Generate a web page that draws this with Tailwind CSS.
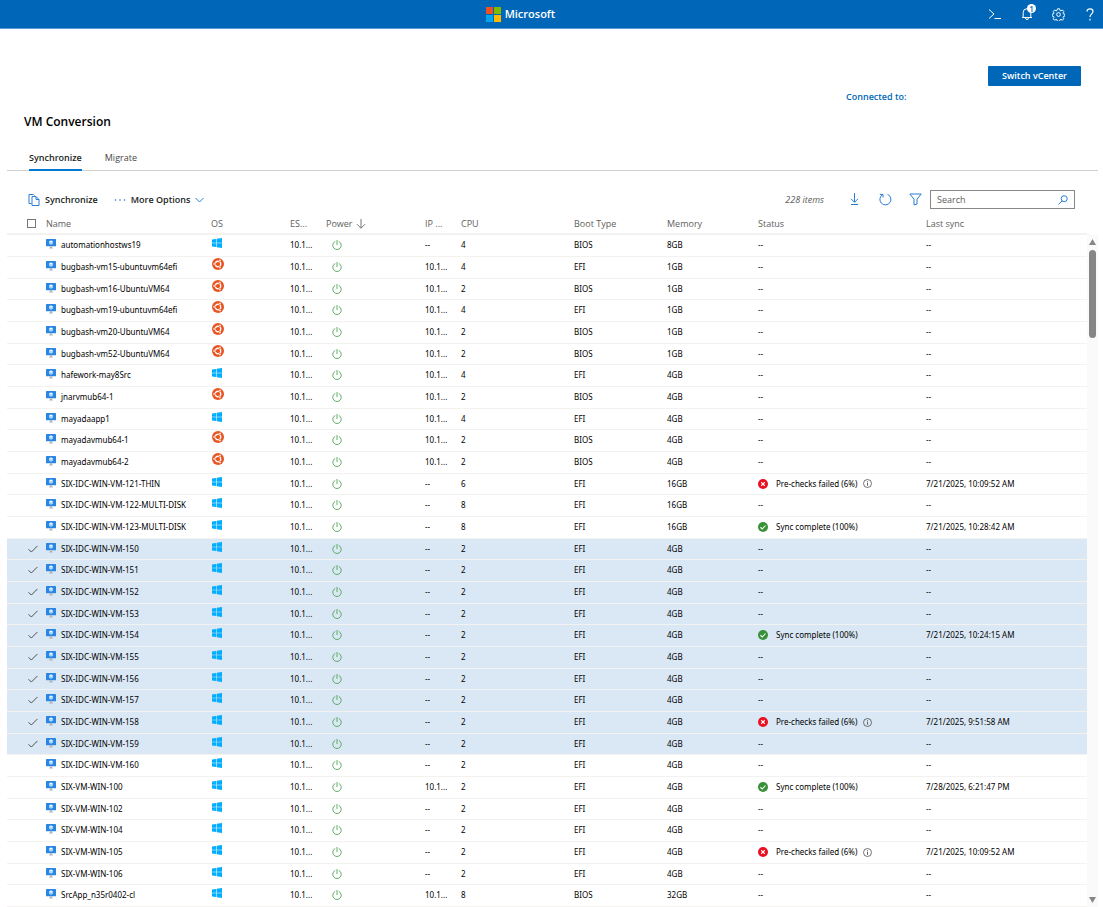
<!DOCTYPE html>
<html lang="en">
<head>
<meta charset="utf-8">
<title>VM Conversion</title>
<meta name="viewport" content="width=device-width, initial-scale=1">
<script src="https://cdn.jsdelivr.net/npm/@tailwindcss/browser@4"></script>
</head>
<body class="flex min-h-screen flex-col bg-white font-['Segoe_UI','Open_Sans',sans-serif] text-[9px] text-[#201f1e]">

<svg class="hidden" aria-hidden="true">
  <defs>
    <symbol id="vm" viewBox="0 0 18 18"><path d="M1 0h16a1 1 0 0 1 1 1v11a1 1 0 0 1-1 1H1a1 1 0 0 1-1-1V1a1 1 0 0 1 1-1z" fill="#2a86e2"/><path d="M9 2.500l3.500 2v4L9 10.500 5.500 8.500v-4z" fill="#a9d6f8"/><path d="M9 2.500l3.500 2L9 6.500 5.500 4.500z" fill="#e6f4fe"/><path d="M7 13h4c0 2 .5 3 2 4H5c1.500-1 2-2 2-4z" fill="#b0b4b8"/></symbol>
    <symbol id="windows" viewBox="0 0 18 18"><path d="M0 2.800L7.600 1.700v6.900H0zM8.600 1.500L18 .2v8.400H8.600zM0 9.500h7.600v6.900L0 15.300zM8.600 9.500H18v8.400l-9.400-1.300z" fill="#00adff"/></symbol>
    <symbol id="ubuntu" viewBox="0 0 24 24"><circle cx="12" cy="12" r="12" fill="#e95420"/><circle cx="12" cy="12" r="5.500" fill="none" stroke="#fff" stroke-width="2.600"/><path d="M12 12L3 12M12 12l5 9M12 12l5-9" stroke="#e95420" stroke-width="1.400"/><g fill="#fff" stroke="#e95420"><circle cx="4.300" cy="12" r="2.300"/><circle cx="15.900" cy="18.800" r="2.300"/><circle cx="15.900" cy="5.200" r="2.300"/></g></symbol>
    <symbol id="power" viewBox="0 0 18 18"><path d="M5.800 2.600a7.600 7.600 0 1 0 6.400 0M9 0v9" fill="none" stroke="#4fa356" stroke-width="1.600"/></symbol>
    <symbol id="failed" viewBox="0 0 20 20"><circle cx="10" cy="10" r="10" fill="#e81123"/><path d="M6.500 6.500l7 7M13.500 6.500l-7 7" stroke="#fff" stroke-width="2.200"/></symbol>
    <symbol id="done" viewBox="0 0 20 20"><circle cx="10" cy="10" r="10" fill="#389138"/><path d="M5 10.500l3.500 3.500L15 7" stroke="#fff" stroke-width="2.200" fill="none"/></symbol>
    <symbol id="info" viewBox="0 0 18 18"><circle cx="9" cy="9" r="8" fill="none" stroke="#484644" stroke-width="1.500"/><path d="M9 7.500v6M9 4.500v1.800" stroke="#484644" stroke-width="1.700"/></symbol>
    <symbol id="check" viewBox="0 0 18 18"><path d="M1 9.500l5 5L17 3.500" fill="none" stroke="#484644" stroke-width="1.700"/></symbol>
  </defs>
</svg>

<header class="flex h-[29px] items-center justify-between border-b border-[#5b9bd5] bg-[#0067b8] pr-[6px] text-white">
  <a href="#" class="ml-[44%] flex items-center gap-1 px-[3px] text-[11px] font-semibold">
    <svg class="size-[15px]" viewBox="0 0 15 15" aria-hidden="true"><path d="M0 0h7v7H0z" fill="#f25022"/><path d="M8 0h7v7H8z" fill="#7fba00"/><path d="M0 8h7v7H0z" fill="#00a4ef"/><path d="M8 8h7v7H8z" fill="#ffb900"/></svg>
    Microsoft
  </a>
  <div class="flex flex-1 items-center justify-end gap-[18px]">
    <button type="button" aria-label="Cloud shell"><svg class="h-3 w-[14px]" viewBox="0 0 14 12" fill="none" stroke="#fff"><path d="M1 1.500l5 4.500-5 4.500M6.500 10.500H13"/></svg></button>
    <button type="button" aria-label="Notifications" class="relative"><svg class="size-[14px]" viewBox="0 0 14 14" fill="none" stroke="#fff"><path d="M2 10.500h10M3.200 10.500V5.500a3.800 3.800 0 0 1 7.600 0v5M5.500 11a1.500 1.500 0 0 0 3 0"/></svg><span class="absolute -top-[3px] left-[7px] flex size-[9px] items-center justify-center rounded-full bg-white text-[8px] font-semibold leading-none text-[#0067b8]">1</span></button>
    <button type="button" aria-label="Settings"><svg class="size-[13px]" viewBox="0 0 24 24" fill="none" stroke="#fff" stroke-width="1.800"><circle cx="12" cy="12" r="3.500"/><path d="M10 1.500h4l.7 3 1.800.8 2.700-1.600 2.600 2.700-1.500 2.700.7 1.700 3 .7v3.200l-3 .8-.7 1.700 1.500 2.700-2.600 2.700-2.700-1.600-1.800.8-.7 3h-4l-.7-3-1.800-.8-2.700 1.600-2.600-2.700 1.500-2.700-.7-1.700-3-.8v-3.200l3-.7.7-1.700-1.500-2.700 2.600-2.700 2.700 1.600 1.800-.8z"/></svg></button>
    <button type="button" aria-label="Help"><svg class="h-[13px] w-[14px]" viewBox="0 0 14 13" fill="none" stroke="#fff" stroke-width="1.200"><path d="M4 3.600C4 1.800 5.300.8 7 .8s3 1 3 2.700C10 5.800 7 6 7 9M7 10.800v1.700"/></svg></button>
  </div>
</header>

<main class="flex flex-col pl-[7px] pr-[5px] pt-[37px]">
  <div class="flex w-full flex-col items-end pr-[17px]">
    <button type="button" class="h-5 w-[93px] rounded-[1px] bg-[#0067b8] text-[9px] font-semibold text-white">Switch vCenter</button>
    <p class="mt-[5px] w-[235px] text-[9px] font-semibold leading-3 text-[#0067b8]">Connected to:</p>
  </div>
  <h1 class="mt-[9px] pl-[17px] text-[12px] font-semibold leading-5 text-black">VM Conversion</h1>

  <nav class="mt-[19px] flex gap-[23px] border-b border-[#d2d0ce] pl-[22px] leading-[14px]" aria-label="Views">
    <a href="#" aria-current="page" class="-mb-px h-5 border-b-2 border-[#0078d4] font-semibold">Synchronize</a>
    <a href="#" class="text-[#484644]">Migrate</a>
  </nav>

  <div class="mt-[19px] flex h-[19px] items-center pl-[21px] pr-[23px]">
    <button type="button" class="flex items-center gap-[5px] font-semibold">
      <svg class="h-3 w-3" viewBox="0 0 12 12" fill="none" stroke="#2b7cd3"><path d="M3.500 9.500h-2.500v-9h4.500l1 1M4 2.500h4l3 3v6H4zM8 2.500v3h3"/></svg>
      Synchronize</button>
    <button type="button" class="ml-4 flex items-center gap-[5px] font-semibold">
      <svg class="h-1 w-[12px]" viewBox="0 0 12 4" fill="#2b7cd3"><circle cx="1.500" cy="2" r=".8"/><circle cx="6" cy="2" r=".8"/><circle cx="10.500" cy="2" r=".8"/></svg>
      More Options
      <svg class="h-2 w-[9px]" viewBox="0 0 9 8" fill="none" stroke="#2b7cd3"><path d="M.5 2l4 4 4-4"/></svg>
    </button>
    <span class="ml-auto italic text-[#605e5c]">228 items</span>
    <button type="button" aria-label="Download" class="ml-[26px]"><svg class="h-[13px] w-[9px]" viewBox="0 0 9 13" fill="none" stroke="#2b7cd3"><path d="M4.500 0v9M1 5.800l3.500 3.500L8 5.800M1 11.500h7"/></svg></button>
    <button type="button" aria-label="Refresh" class="ml-5"><svg class="size-[13px]" viewBox="0 0 13 13" fill="none" stroke="#2b7cd3"><path d="M8.500 1.300a5.500 5.500 0 1 1-5 .4M.8 1.400h3.200v3.100"/></svg></button>
    <button type="button" aria-label="Filter" class="ml-[17px]"><svg class="size-[13px]" viewBox="0 0 13 13" fill="none" stroke="#2b7cd3"><path d="M.8 1h11.400L8 6.200V11L5 12V6.200z"/></svg></button>
    <div class="ml-2 flex h-[19px] w-[145px] items-center border border-[#8a8886] px-[6px]">
      <label for="search" class="hidden">Search</label>
      <input id="search" type="text" placeholder="Search" class="h-full min-w-0 flex-1 text-[9px] leading-4 outline-none placeholder:text-[#605e5c]">
      <svg class="size-[10px]" viewBox="0 0 10 10" fill="none" stroke="#2b7cd3"><circle cx="6.200" cy="3.700" r="3"/><path d="M4.100 5.900L.5 9.500"/></svg>
    </div>
  </div>

  <div class="mt-[5px] flex">
    <table class="min-w-0 flex-1 table-fixed border-collapse text-left">
      <colgroup><col class="w-[39px]"><col class="w-[165px]"><col class="w-[79px]"><col class="w-[36px]"><col class="w-[99px]"><col class="w-[36px]"><col class="w-[113px]"><col class="w-[93px]"><col class="w-[91px]"><col class="w-[168px]"><col class="w-[161px]"></colgroup>
      <thead>
        <tr class="h-5 border-b-2 border-[#f3f2f1] text-[#605e5c] *:p-0 *:font-normal">
          <th scope="col"><input type="checkbox" aria-label="Select all" class="ml-5 block size-[9px] appearance-none border border-[#797775]"></th>
          <th scope="col">Name</th><th scope="col">OS</th><th scope="col">ES...</th>
          <th scope="col"><span class="flex items-center gap-[3px]">Power <svg class="size-[10px]" viewBox="0 0 10 10" fill="none" stroke="#797775"><path d="M5 0v9.200M1 5.200l4 4 4-4"/></svg></span></th>
          <th scope="col">IP ...</th><th scope="col">CPU</th><th scope="col">Boot Type</th><th scope="col">Memory</th><th scope="col">Status</th><th scope="col">Last sync</th>
        </tr>
      </thead>
      <tbody id="rows" class="font-['Segoe_UI','Noto_Sans',sans-serif] text-[8px] text-black"></tbody>
    </table>
    <div class="mt-5 flex w-[11px] flex-col items-center bg-[#fafafa] py-1" aria-hidden="true">
      <svg class="mt-px h-[6px] w-[7px]" viewBox="0 0 7 6"><path d="M3.500 0L7 6H0z" fill="#868686"/></svg>
      <div class="mt-[5px] h-[88px] w-[7px] rounded-full bg-[#868686]"></div>
      <svg class="mt-auto h-[6px] w-[7px]" viewBox="0 0 7 6"><path d="M3.500 6L7 0H0z" fill="#868686"/></svg>
    </div>
  </div>
</main>

<script>
// name, os, has IP, cpu, boot type, memory, status, last sync, selected
const vms = [
  ["automationhostws19","w",0,4,"BIOS","8GB"],
  ["bugbash-vm15-ubuntuvm64efi","u",1,4,"EFI","1GB"],
  ["bugbash-vm16-UbuntuVM64","u",1,2,"BIOS","1GB"],
  ["bugbash-vm19-ubuntuvm64efi","u",1,4,"EFI","1GB"],
  ["bugbash-vm20-UbuntuVM64","u",1,2,"BIOS","1GB"],
  ["bugbash-vm52-UbuntuVM64","u",1,2,"BIOS","1GB"],
  ["hafework-may8Src","w",1,4,"EFI","4GB"],
  ["jnarvmub64-1","u",1,2,"BIOS","4GB"],
  ["mayadaapp1","w",1,4,"EFI","4GB"],
  ["mayadavmub64-1","u",1,2,"BIOS","4GB"],
  ["mayadavmub64-2","u",1,2,"BIOS","4GB"],
  ["SIX-IDC-WIN-VM-121-THIN","w",0,6,"EFI","16GB","f","7/21/2025, 10:09:52 AM"],
  ["SIX-IDC-WIN-VM-122-MULTI-DISK","w",0,8,"EFI","16GB"],
  ["SIX-IDC-WIN-VM-123-MULTI-DISK","w",0,8,"EFI","16GB","d","7/21/2025, 10:28:42 AM"],
  ["SIX-IDC-WIN-VM-150","w",0,2,"EFI","4GB","","",1],
  ["SIX-IDC-WIN-VM-151","w",0,2,"EFI","4GB","","",1],
  ["SIX-IDC-WIN-VM-152","w",0,2,"EFI","4GB","","",1],
  ["SIX-IDC-WIN-VM-153","w",0,2,"EFI","4GB","","",1],
  ["SIX-IDC-WIN-VM-154","w",0,2,"EFI","4GB","d","7/21/2025, 10:24:15 AM",1],
  ["SIX-IDC-WIN-VM-155","w",0,2,"EFI","4GB","","",1],
  ["SIX-IDC-WIN-VM-156","w",0,2,"EFI","4GB","","",1],
  ["SIX-IDC-WIN-VM-157","w",0,2,"EFI","4GB","","",1],
  ["SIX-IDC-WIN-VM-158","w",0,2,"EFI","4GB","f","7/21/2025, 9:51:58 AM",1],
  ["SIX-IDC-WIN-VM-159","w",0,2,"EFI","4GB","","",1],
  ["SIX-IDC-WIN-VM-160","w",0,2,"EFI","4GB"],
  ["SIX-VM-WIN-100","w",1,2,"EFI","4GB","d","7/28/2025, 6:21:47 PM"],
  ["SIX-VM-WIN-102","w",0,2,"EFI","4GB"],
  ["SIX-VM-WIN-104","w",0,2,"EFI","4GB"],
  ["SIX-VM-WIN-105","w",0,2,"EFI","4GB","f","7/21/2025, 10:09:52 AM"],
  ["SIX-VM-WIN-106","w",0,2,"EFI","4GB"],
  ["SrcApp_n35r0402-cl","w",1,8,"BIOS","32GB"]
];
const os = {
  w: '<svg class="mb-1 ml-px size-[10px]" role="img" aria-label="Windows"><use href="#windows"/></svg>',
  u: '<svg class="mb-[6px] ml-px size-3" role="img" aria-label="Ubuntu"><use href="#ubuntu"/></svg>'
};
const status = {
  f: '<span class="flex items-center"><svg class="mr-2 size-[10px]" aria-hidden="true"><use href="#failed"/></svg>Pre-checks failed (6%)<svg class="ml-[6px] size-[9px]" aria-hidden="true"><use href="#info"/></svg></span>',
  d: '<span class="flex items-center"><svg class="mr-2 size-[10px]" aria-hidden="true"><use href="#done"/></svg>Sync complete (100%)</span>'
};
document.getElementById("rows").innerHTML = vms.map(([name, o, ip, cpu, boot, mem, st, sync, sel]) => `
  <tr class="h-[22px] whitespace-nowrap border-b border-[#f3f2f1] leading-3 *:p-0 nth-[3n]:h-[21px] ${sel ? "bg-[#dae8f5]" : ""}">
    <td><label class="ml-[21px] block size-[10px]"><input type="checkbox" class="peer sr-only" aria-label="Select ${name}" ${sel ? "checked" : ""}><svg class="hidden size-[10px] peer-checked:block" aria-hidden="true"><use href="#check"/></svg></label></td>
    <td><span class="flex items-center gap-[5px]"><svg class="mb-[2px] size-[10px]" aria-hidden="true"><use href="#vm"/></svg>${name}</span></td>
    <td>${os[o]}</td>
    <td>10.1...</td>
    <td><svg class="ml-[6px] size-[10px]" role="img" aria-label="On"><use href="#power"/></svg></td>
    <td>${ip ? "10.1..." : "--"}</td>
    <td>${cpu}</td><td>${boot}</td><td>${mem}</td>
    <td>${status[st] || "--"}</td>
    <td>${sync || "--"}</td>
  </tr>`).join("");
</script>
</body>
</html>
